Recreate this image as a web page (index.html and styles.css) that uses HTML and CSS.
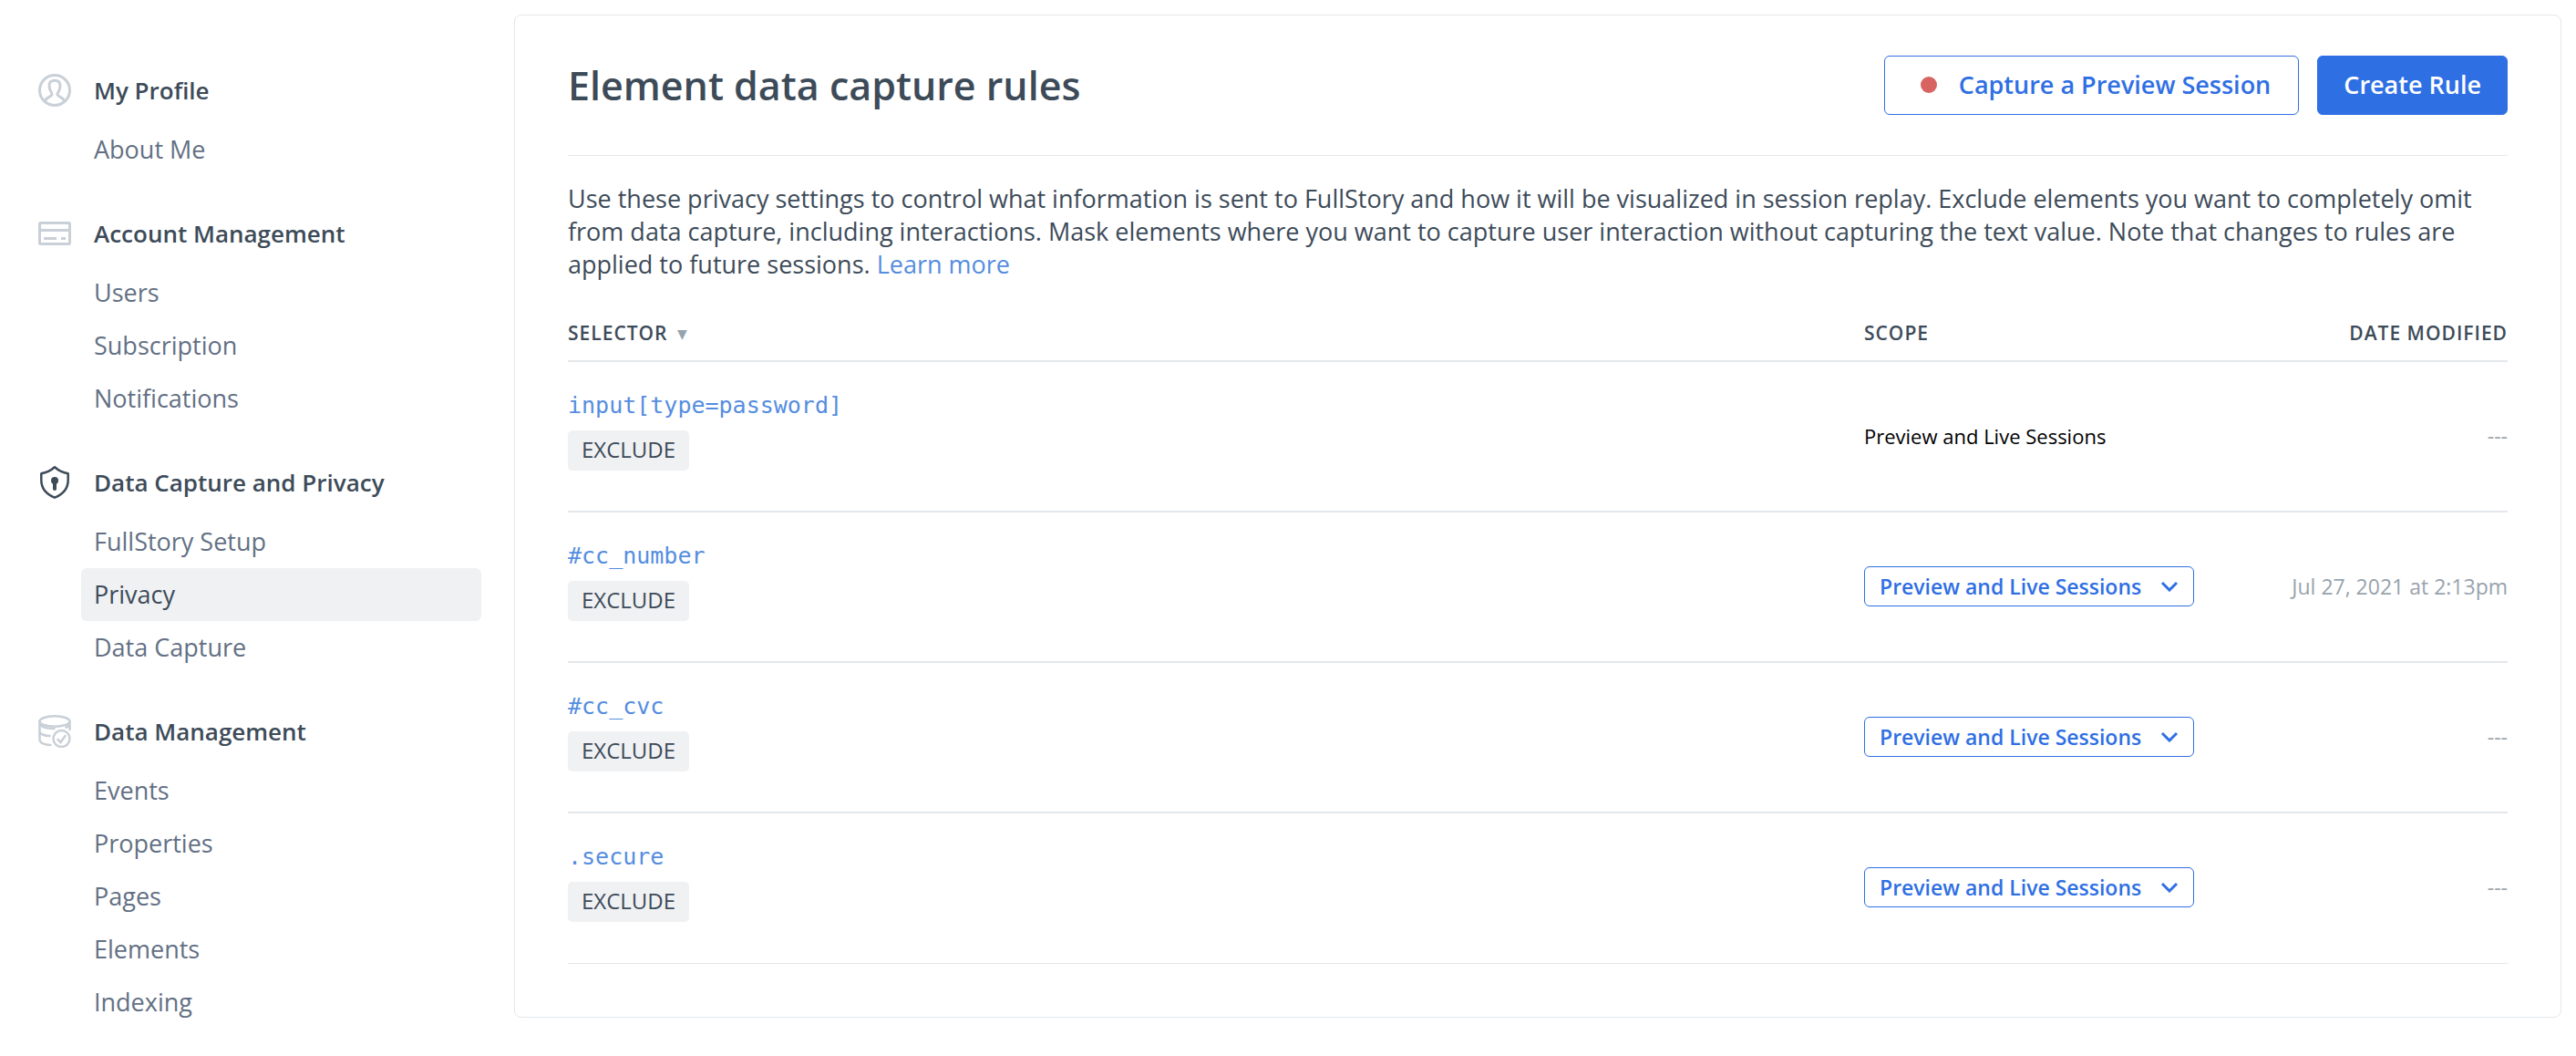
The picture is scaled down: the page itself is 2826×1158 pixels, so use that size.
FILE: index.html
```
<!DOCTYPE html>
<html lang="en">
<head>
    <meta charset="UTF-8">
    <meta name="viewport" content="width=device-width, initial-scale=1.0">
    <title>Element data capture rules</title>
    <link rel="stylesheet" href="styles.css">
</head>
<body>
    <div class="layout">
        <nav class="sidebar">
            <section class="nav-group">
                <h2 class="nav-title">
                    <svg class="nav-icon" viewBox="0 0 36 36" fill="none" stroke="currentColor" stroke-width="3">
                        <circle cx="18" cy="18" r="16.5"/>
                        <path d="M7.500 30c.8-3 3-4 5-5 2.500-1.200 3-2.700 1.700-4.800-1.500-2.300-2.200-4.500-2.200-7.200 0-3.800 2.200-5.700 6-5.700s6 1.900 6 5.700c0 2.700-.7 4.900-2.200 7.200-1.300 2.100-.8 3.600 1.700 4.800 2 1 4.200 2 5 5"/>
                    </svg>
                    My Profile
                </h2>
                <ul class="nav-list">
                    <li><a class="nav-link" href="#">About Me</a></li>
                </ul>
            </section>

            <section class="nav-group">
                <h2 class="nav-title">
                    <svg class="nav-icon" viewBox="0 0 36 36" fill="none" stroke="currentColor" stroke-width="3">
                        <rect x="1.500" y="6.500" width="33" height="23" rx="1"/>
                        <path d="M1.500 14.500h33M6 23.500h14M25 23.500h5"/>
                    </svg>
                    Account Management
                </h2>
                <ul class="nav-list">
                    <li><a class="nav-link" href="#">Users</a></li>
                    <li><a class="nav-link" href="#">Subscription</a></li>
                    <li><a class="nav-link" href="#">Notifications</a></li>
                </ul>
            </section>

            <section class="nav-group">
                <h2 class="nav-title">
                    <svg class="nav-icon dark" viewBox="0 0 36 36" fill="none" stroke="currentColor" stroke-width="2.500" stroke-linejoin="round">
                        <path d="M18 1.300c4 3.500 8.500 6 14.700 7v7.200c0 9-5.700 15.500-14.700 19.200-9-3.700-14.700-10.200-14.700-19.200v-7.200c6.200-1 10.700-3.500 14.700-7z"/>
                        <circle cx="18" cy="16" r="4" fill="currentColor" stroke="none"/>
                        <path d="M18 17v8" stroke-width="4" stroke-linecap="round"/>
                    </svg>
                    Data Capture and Privacy
                </h2>
                <ul class="nav-list">
                    <li><a class="nav-link" href="#">FullStory Setup</a></li>
                    <li><a class="nav-link active" href="#">Privacy</a></li>
                    <li><a class="nav-link" href="#">Data Capture</a></li>
                </ul>
            </section>

            <section class="nav-group">
                <h2 class="nav-title">
                    <svg class="nav-icon" viewBox="0 0 36 36" fill="none" stroke="currentColor" stroke-width="2.500" stroke-linecap="round">
                        <ellipse cx="18" cy="7" rx="16.500" ry="5.700"/>
                        <path d="M1.500 7v20c0 3.500 5 5.500 12 6M1.500 9c1 4 8 6 16 6M1.500 18.500c1 3 5 4.300 11 4.600M34.500 7v9M34.500 10c-.5 1.500-2 3-4 3.700"/>
                        <circle cx="25.500" cy="26" r="9"/>
                        <path d="M21.500 27l3 3 5-7"/>
                    </svg>
                    Data Management
                </h2>
                <ul class="nav-list">
                    <li><a class="nav-link" href="#">Events</a></li>
                    <li><a class="nav-link" href="#">Properties</a></li>
                    <li><a class="nav-link" href="#">Pages</a></li>
                    <li><a class="nav-link" href="#">Elements</a></li>
                    <li><a class="nav-link" href="#">Indexing</a></li>
                </ul>
            </section>
        </nav>

        <main class="panel">
            <header class="panel-header">
                <h1>Element data capture rules</h1>
                <div class="actions">
                    <button class="btn btn-outline" type="button"><span class="record-dot"></span>Capture a Preview Session</button>
                    <button class="btn btn-primary" type="button">Create Rule</button>
                </div>
            </header>

            <p class="intro">Use these privacy settings to control what information is sent to FullStory and how it will be visualized in session replay. Exclude elements you want to completely omit from data capture, including interactions. Mask elements where you want to capture user interaction without capturing the text value. Note that changes to rules are applied to future sessions. <a href="#">Learn more</a></p>

            <table class="rules">
                <thead>
                    <tr>
                        <th class="col-selector">Selector <span class="sort">▼</span></th>
                        <th class="col-scope">Scope</th>
                        <th class="col-date">Date Modified</th>
                    </tr>
                </thead>
                <tbody>
                    <tr>
                        <td class="col-selector"><a class="selector" href="#">input[type=password]</a><span class="badge">EXCLUDE</span></td>
                        <td class="col-scope">Preview and Live Sessions</td>
                        <td class="col-date">---</td>
                    </tr>
                    <tr>
                        <td class="col-selector"><a class="selector" href="#">#cc_number</a><span class="badge">EXCLUDE</span></td>
                        <td class="col-scope">
                            <span class="scope-select">
                                <select aria-label="Scope for #cc_number"><option>Preview and Live Sessions</option></select>
                                <svg class="chevron" viewBox="0 0 20 12"><path d="M2 2l8 8 8-8"/></svg>
                            </span>
                        </td>
                        <td class="col-date">Jul 27, 2021 at 2:13pm</td>
                    </tr>
                    <tr>
                        <td class="col-selector"><a class="selector" href="#">#cc_cvc</a><span class="badge">EXCLUDE</span></td>
                        <td class="col-scope">
                            <span class="scope-select">
                                <select aria-label="Scope for #cc_cvc"><option>Preview and Live Sessions</option></select>
                                <svg class="chevron" viewBox="0 0 20 12"><path d="M2 2l8 8 8-8"/></svg>
                            </span>
                        </td>
                        <td class="col-date">---</td>
                    </tr>
                    <tr>
                        <td class="col-selector"><a class="selector" href="#">.secure</a><span class="badge">EXCLUDE</span></td>
                        <td class="col-scope">
                            <span class="scope-select">
                                <select aria-label="Scope for .secure"><option>Preview and Live Sessions</option></select>
                                <svg class="chevron" viewBox="0 0 20 12"><path d="M2 2l8 8 8-8"/></svg>
                            </span>
                        </td>
                        <td class="col-date">---</td>
                    </tr>
                </tbody>
            </table>
        </main>
    </div>
</body>
</html>
```
FILE: styles.css
```
:root {
    --text: #3d4b59;
    --text-nav: #637084;
    --text-muted: #98a3ad;
    --blue: #2f6fe4;
    --link: #558de0;
    --line: #e3e7eb;
    --fill: #f0f1f3;
    --font: "Open Sans", "Noto Sans", sans-serif;
    --mono: "DejaVu Sans Mono", monospace;
}
* {
    box-sizing: border-box;
}
body {
    margin: 0;
    font-family: var(--font);
    font-size: 27px;
    line-height: 36px;
    color: var(--text);
    background: #fff;
}
a {
    color: var(--link);
    text-decoration: none;
}
.layout {
    display: flex;
    align-items: flex-start;
    padding: 16px 16px 0 42px;
}

/* sidebar */
.sidebar {
    flex: 0 0 486px;
    margin-right: 36px;
    padding-top: 65px;
}
.nav-group {
    margin-bottom: 45px;
}
.nav-group:last-child {
    margin-bottom: 0;
}
.nav-title {
    display: flex;
    align-items: center;
    gap: 25px;
    margin: 0 0 18px;
    font-size: 26px;
    font-weight: 600;
    line-height: 36px;
}
.nav-icon {
    flex: none;
    width: 36px;
    height: 36px;
    color: #c9d0d7;
}
.nav-icon.dark {
    color: var(--text);
}
.nav-list {
    margin: 0 0 0 47px;
    padding: 0;
    list-style: none;
}
.nav-link {
    display: block;
    padding: 11px 14px;
    border-radius: 6px;
    color: var(--text-nav);
}
.nav-link.active {
    color: var(--text);
    background: var(--fill);
}

/* panel */
.panel {
    flex: 1;
    padding: 44px 58px 58px;
    border: 1px solid var(--line);
    border-radius: 8px;
}
.panel-header {
    display: flex;
    justify-content: space-between;
    align-items: center;
    padding-bottom: 44px;
    border-bottom: 1px solid var(--line);
}
h1 {
    margin: 0;
    font-size: 43px;
    font-weight: 600;
    line-height: 60px;
}
.actions {
    display: flex;
    gap: 20px;
}
.btn {
    display: flex;
    align-items: center;
    height: 65px;
    padding: 0 28px 2px;
    border: 1px solid var(--blue);
    border-radius: 6px;
    font: 600 27px/36px var(--font);
}
.btn-outline {
    padding-right: 30px;
    padding-left: 39px;
    color: var(--blue);
    background: #fff;
}
.btn-primary {
    color: #fff;
    background: var(--blue);
}
.record-dot {
    width: 18px;
    height: 18px;
    margin-right: 24px;
    border-radius: 50%;
    background: #d76461;
}
.intro {
    margin: 29px 0 43px;
}

/* rules table */
.rules {
    width: 100%;
    border-collapse: separate;
    border-spacing: 0;
    table-layout: fixed;
}
th {
    padding: 0 0 16px;
    border-bottom: 2px solid var(--line);
    font-size: 21px;
    font-weight: 600;
    line-height: 28px;
    letter-spacing: 1px;
    text-transform: uppercase;
    text-align: left;
    vertical-align: bottom;
}
td {
    height: 165px;
    padding: 0 0 2px;
    border-bottom: 2px solid var(--line);
}
tr:last-child td {
    border-bottom-width: 1px;
}
.sort {
    margin-left: 4px;
    font-family: "DejaVu Sans", sans-serif;
    font-size: 14px;
    line-height: 1;
    vertical-align: 2px;
    color: var(--text-muted);
}
th.col-scope {
    width: 406px;
}
th.col-date {
    width: 300px;
}
.col-date {
    text-align: right;
}
td.col-selector {
    padding-top: 30px;
    vertical-align: top;
}
td.col-scope {
    font-size: 22px;
    color: #000;
}
td.col-date {
    font-size: 23px;
    color: var(--text-muted);
}
.selector {
    display: block;
    font-family: var(--mono);
    font-size: 25px;
}
.badge {
    display: inline-block;
    margin-top: 9px;
    padding: 3px 15px 5px;
    border-radius: 5px;
    background: var(--fill);
    font-size: 24px;
}
.scope-select {
    display: inline-grid;
    align-items: center;
    vertical-align: middle;
}
.scope-select select {
    grid-area: 1 / 1;
    height: 44px;
    padding: 0 56px 0 16px;
    border: 1px solid var(--blue);
    border-radius: 6px;
    color: var(--blue);
    background: #fff;
    font: 600 23px/36px var(--font);
    appearance: none;
}
.chevron {
    grid-area: 1 / 1;
    justify-self: end;
    width: 20px;
    height: 12px;
    margin-right: 17px;
    fill: none;
    stroke: var(--blue);
    stroke-width: 3;
    pointer-events: none;
}
```
